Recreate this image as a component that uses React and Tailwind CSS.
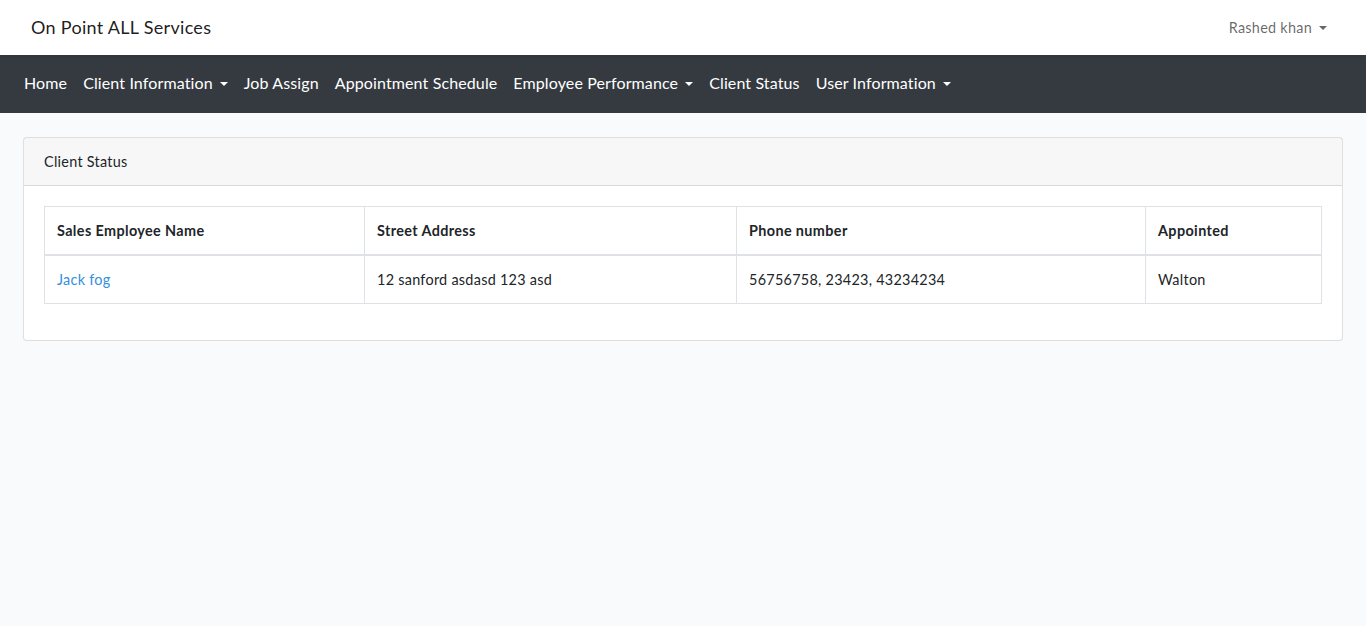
import React from "react";

const Caret = ({ className = "" }) => (
  <span
    className={`inline-block ml-[7px] align-[3px] border-t-[4.8px] border-x-[4.8px] border-x-transparent border-b-0 ${className}`}
  />
);

const navItems = [
  { label: "Home" },
  { label: "Client Information", dropdown: true },
  { label: "Job Assign" },
  { label: "Appointment Schedule" },
  { label: "Employee Performance", dropdown: true },
  { label: "Client Status" },
  { label: "User Information", dropdown: true },
];

const rows = [
  {
    name: "Jack fog",
    address: "12 sanford asdasd 123 asd",
    phone: "56756758, 23423, 43234234",
    appointed: "Walton",
  },
];

export default function App() {
  return (
    <div
      className="min-h-[626px] bg-[#f8fafc] text-[#212529] text-[14.4px] leading-[1.6] tracking-[0.28px]"
      style={{ fontFamily: "Lato, 'Noto Sans', sans-serif" }}
    >
      {/* Top navbar */}
      <nav className="bg-white h-[55px] flex items-center justify-between px-[31px] shadow-[0_2px_4px_rgba(0,0,0,0.075)] relative z-10">
        <a className="text-[18px] text-black/90 tracking-[0.3px] -mt-[1px]">On Point ALL Services</a>
        <a className="text-[14.4px] text-black/60 pr-[8px]">
          Rashed khan
          <Caret className="border-t-black/60" />
        </a>
      </nav>

      {/* Main menu */}
      <nav className="bg-[#343a40] h-[58px] flex items-center px-[16px]">
        {navItems.map((item) => (
          <a key={item.label} className="px-[8px] text-[16px] text-white whitespace-nowrap tracking-[0.12px] -mt-[2px]">
            {item.label}
            {item.dropdown && <Caret className="border-t-white" />}
          </a>
        ))}
      </nav>

      {/* Content */}
      <main className="py-[24px] px-[23px]">
        <div className="bg-white border border-black/[0.125] rounded-[4px]">
          <div className="bg-black/[0.03] border-b border-black/[0.125] px-[20px] py-[12px]">
            Client Status
          </div>
          <div className="p-[20px] pb-[36px]">
            <table className="w-full border-collapse border border-[#dee2e6]">
              <thead>
                <tr>
                  <th className="text-left font-bold tracking-[0.38px] border border-[#dee2e6] border-b-2 px-[12px] py-[12px] w-[320px]">
                    Sales Employee Name
                  </th>
                  <th className="text-left font-bold tracking-[0.38px] border border-[#dee2e6] border-b-2 px-[12px] py-[12px] w-[372px]">
                    Street Address
                  </th>
                  <th className="text-left font-bold tracking-[0.38px] border border-[#dee2e6] border-b-2 px-[12px] py-[12px] w-[409px]">
                    Phone number
                  </th>
                  <th className="text-left font-bold tracking-[0.38px] border border-[#dee2e6] border-b-2 px-[12px] py-[12px]">
                    Appointed
                  </th>
                </tr>
              </thead>
              <tbody>
                {rows.map((r) => (
                  <tr key={r.name}>
                    <td className="border border-[#dee2e6] px-[12px] py-[12px]">
                      <a className="text-[#3490dc]">{r.name}</a>
                    </td>
                    <td className="border border-[#dee2e6] px-[12px] py-[12px]">{r.address}</td>
                    <td className="border border-[#dee2e6] px-[12px] py-[12px]">{r.phone}</td>
                    <td className="border border-[#dee2e6] px-[12px] py-[12px]">{r.appointed}</td>
                  </tr>
                ))}
              </tbody>
            </table>
          </div>
        </div>
      </main>
    </div>
  );
}
